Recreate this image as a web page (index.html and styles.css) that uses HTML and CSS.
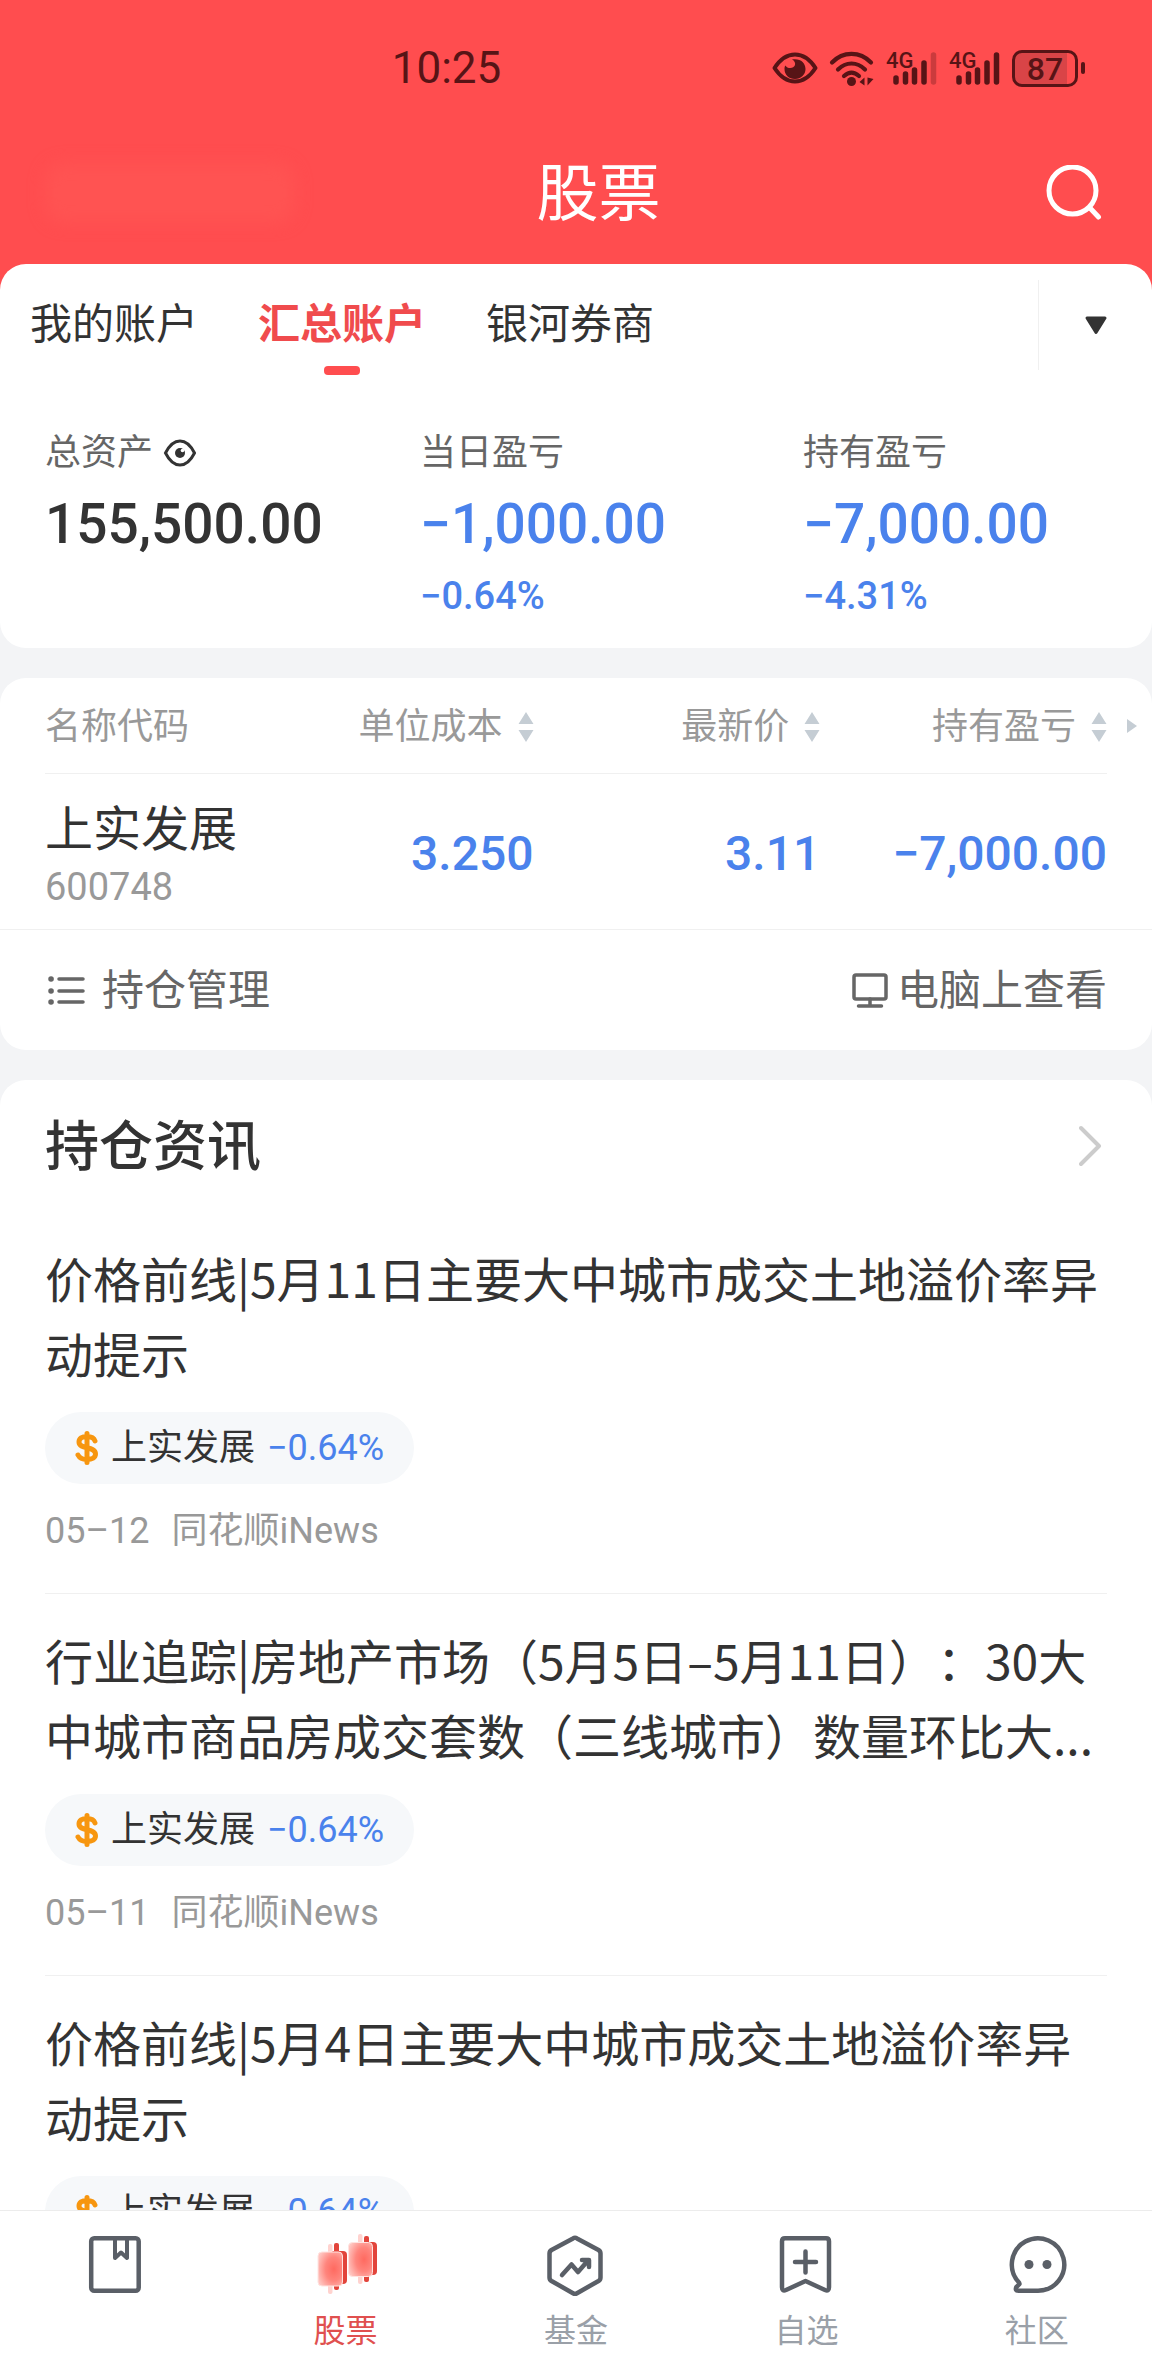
FILE: index.html
```html
<!DOCTYPE html>
<html lang="zh-CN">
<head>
<meta charset="utf-8">
<meta name="viewport" content="width=device-width, initial-scale=1">
<title>股票</title>
<link rel="stylesheet" href="styles.css">
</head>
<body>
<svg class="defs" aria-hidden="true">
  <defs>
    <symbol id="sort" viewBox="0 0 16 32"><path d="M8 1l7.500 12H.5zM8 31l7.500-12H.5z"/></symbol>
    <symbol id="dollar" viewBox="0 0 24 34">
      <path d="M20 10c-1-3-4-4.500-8-4.500-5 0-8 2-8 5.500 0 8 16.500 3.500 16.500 12 0 3.500-3.500 5.500-8.500 5.500-4.500 0-7.500-1.500-9-4.500M12 2.500v29" fill="none" stroke="currentColor" stroke-width="5" stroke-linecap="round"/>
    </symbol>
  </defs>
</svg>
<div class="app">
  <header class="top">
    <div class="status">
      <time class="clock">10:25</time>
      <div class="status-icons">
        <svg width="46" height="38" viewBox="0 0 46 38" aria-hidden="true">
          <path d="M2.500 19C9 9 16 5.500 23 5.500S37 9 43.500 19C37 29 30 32.500 23 32.500S9 29 2.500 19z" fill="none" stroke="currentColor" stroke-width="4" stroke-linejoin="round"/>
          <path d="M20 10.500c8-1.500 13.500 3 13.500 9.500 0 5.500-4.500 10-10.500 10s-10.500-4-10.500-10c0-1.500.3-2.500.8-3.500 2 3.500 8.500 3.500 9.700-.5.6-2-.5-4.500-3-5.500z" fill="currentColor"/>
        </svg>
        <svg width="46" height="38" viewBox="0 0 46 38" aria-hidden="true">
          <g fill="none" stroke="currentColor" stroke-width="4.200" stroke-linecap="round">
            <path d="M3 13.500c11-11.500 28-11.500 39 0M9 20.500c8-8 19-8 27 0M15 27c5-4.500 10-4.500 15 0"/>
          </g>
          <circle cx="22.500" cy="32.500" r="4.500" fill="currentColor"/>
          <path d="M30.500 33l5-4.500v8zM36.500 28.500v8M38.500 28.500v8l6-6.500z" fill="currentColor"/>
        </svg>
        <svg width="52" height="38" viewBox="0 0 52 38" aria-label="4G">
          <text class="net" x="0" y="19">4G</text>
          <g stroke="currentColor" stroke-width="5.500" stroke-linecap="round">
            <path d="M10 29v4M19.500 25v8M28.500 21v12M38 14v19"/><path d="M47.500 6v27" opacity=".3"/>
          </g>
        </svg>
        <svg width="52" height="38" viewBox="0 0 52 38" aria-label="4G">
          <text class="net" x="0" y="19">4G</text>
          <path d="M10 29v4M19.500 25v8M28.500 21v12M38 14v19M47.500 6v27" stroke="currentColor" stroke-width="5.500" stroke-linecap="round"/>
        </svg>
        <div class="battery"><span class="battery-body">87</span><span class="battery-tip"></span></div>
      </div>
    </div>
    <div class="title-bar">
      <span class="account-name"></span>
      <h1 class="page-title">股票</h1>
      <button class="search" type="button" aria-label="搜索">
        <svg width="56" height="56" viewBox="0 0 56 56" fill="none" stroke="currentColor" stroke-width="5" stroke-linecap="round"><circle cx="26.500" cy="25.500" r="23.500"/><path d="M44 43l8.500 9"/></svg>
      </button>
    </div>
  </header>

  <main class="content">
    <section class="card">
      <div class="tab-row">
        <nav class="tabs">
          <button class="tab" type="button">我的账户</button>
          <button class="tab tab-active" type="button">汇总账户</button>
          <button class="tab" type="button">银河券商</button>
        </nav>
        <button class="more" type="button" aria-label="展开账户">
          <svg width="24" height="20" viewBox="0 0 24 20"><path d="M3 3h18l-9 14.500z" fill="currentColor" stroke="currentColor" stroke-width="3" stroke-linejoin="round"/></svg>
        </button>
      </div>
      <dl class="summary">
        <div class="stat">
          <dt class="stat-label">总资产
            <button class="eye" type="button" aria-label="隐藏金额">
              <svg width="34" height="30" viewBox="0 0 34 30"><path d="M2.500 15C6 8 11 3 17 3s11 5 14.500 12C28 22 23 27 17 27S6 22 2.500 15z" fill="none" stroke="currentColor" stroke-width="3"/><circle cx="17" cy="15" r="5" fill="currentColor"/><circle cx="19.500" cy="12.500" r="1.800" fill="#fff"/></svg>
            </button>
          </dt>
          <dd class="stat-value">155,500.00</dd>
        </div>
        <div class="stat">
          <dt class="stat-label">当日盈亏</dt>
          <dd class="stat-value loss">−1,000.00</dd>
          <dd class="stat-rate loss">−0.64%</dd>
        </div>
        <div class="stat">
          <dt class="stat-label">持有盈亏</dt>
          <dd class="stat-value loss">−7,000.00</dd>
          <dd class="stat-rate loss">−4.31%</dd>
        </div>
      </dl>
    </section>

    <section class="card">
      <div class="holdings">
        <table class="holdings-table">
          <thead>
            <tr>
              <th class="col-name" scope="col">名称代码</th>
              <th class="col-num" scope="col"><button class="sort" type="button">单位成本<svg width="16" height="32"><use href="#sort"/></svg></button></th>
              <th class="col-num" scope="col"><button class="sort" type="button">最新价<svg width="16" height="32"><use href="#sort"/></svg></button></th>
              <th class="col-num" scope="col"><button class="sort" type="button">持有盈亏<svg width="16" height="32"><use href="#sort"/></svg></button></th>
            </tr>
          </thead>
          <tbody>
            <tr>
              <td class="col-name"><div class="stock-name">上实发展</div><div class="stock-code">600748</div></td>
              <td class="col-num loss">3.250</td>
              <td class="col-num loss">3.11</td>
              <td class="col-num loss">−7,000.00</td>
            </tr>
          </tbody>
        </table>
        <button class="scroll-next" type="button" aria-label="更多列"><svg width="10" height="14" viewBox="0 0 10 14"><path d="M0 0l10 7-10 7z" fill="currentColor"/></svg></button>
      </div>
      <div class="tools">
        <button class="tool tool-manage" type="button">
          <svg width="42" height="42" viewBox="0 0 42 42" fill="none" stroke="currentColor" stroke-width="3.500" stroke-linecap="round"><path d="M14 9h24M14 21h24M14 32h24"/><path d="M6 9h.1M6 21h.1M6 32h.1" stroke-width="5.500"/></svg>
          持仓管理
        </button>
        <button class="tool tool-desktop" type="button">
          <svg width="42" height="42" viewBox="0 0 42 42" fill="none" stroke="currentColor" stroke-width="3.500" stroke-linecap="round" stroke-linejoin="round"><rect x="5" y="5" width="32" height="24" rx="2"/><path d="M21 29v7M9.500 36h23"/></svg>
          电脑上查看
        </button>
      </div>
    </section>

    <section class="card">
      <a class="news-head" href="#news">
        <h2 class="news-heading">持仓资讯</h2>
        <svg class="chevron" width="28" height="42" viewBox="0 0 28 42" fill="none" stroke="currentColor" stroke-width="4" stroke-linecap="round" stroke-linejoin="round"><path d="M2 3l18 18L2 39"/></svg>
      </a>
      <article class="news">
        <h3 class="news-title">价格前线|5月11日主要大中城市成交土地溢价率异动提示</h3>
        <a class="chip" href="#600748"><svg class="chip-icon" width="24" height="34"><use href="#dollar"/></svg>上实发展<span class="chip-rate">−0.64%</span></a>
        <p class="meta"><time>05–12</time><span>同花顺iNews</span></p>
      </article>
      <article class="news">
        <h3 class="news-title">行业追踪|房地产市场（5月5日–5月11日）<span class="colon">：</span>30大中城市商品房成交套数（三线城市）数量环比大...</h3>
        <a class="chip" href="#600748"><svg class="chip-icon" width="24" height="34"><use href="#dollar"/></svg>上实发展<span class="chip-rate">−0.64%</span></a>
        <p class="meta"><time>05–11</time><span>同花顺iNews</span></p>
      </article>
      <article class="news">
        <h3 class="news-title">价格前线|5月4日主要大中城市成交土地溢价率异动提示</h3>
        <a class="chip" href="#600748"><svg class="chip-icon" width="24" height="34"><use href="#dollar"/></svg>上实发展<span class="chip-rate">−0.64%</span></a>
      </article>
    </section>
  </main>

  <nav class="bottom-nav">
    <a class="nav-item" href="#ledger" aria-label="账本">
      <svg width="64" height="64" viewBox="0 0 64 64" fill="none" stroke="currentColor" stroke-width="4.500" stroke-linejoin="round"><rect x="8.200" y="5.200" width="47.500" height="52.500" rx="3"/><path d="M32 5v20l6-5.500 6 5.500V5" stroke-width="4"/></svg>
      <span class="nav-label"></span>
    </a>
    <a class="nav-item nav-active" href="#stocks">
      <svg width="64" height="64" viewBox="0 0 64 64">
        <defs>
          <radialGradient id="candle" cx=".65" cy=".5" r=".7"><stop offset="0" stop-color="#ff6a60"/><stop offset=".5" stop-color="#ff857d"/><stop offset="1" stop-color="#ffc4bf"/></radialGradient>
        </defs>
        <g fill="#e2443b"><rect x="20" y="10" width="5" height="47" rx="2"/><rect x="14" y="18" width="19" height="33" rx="4"/><rect x="50" y="3" width="5" height="46" rx="2"/><rect x="44" y="9" width="19" height="33" rx="4"/></g>
        <g fill="#ffd3cf"><rect x="14" y="11" width="4.500" height="50" rx="2"/><rect x="44" y="1" width="4.500" height="50" rx="2"/></g>
        <g fill="url(#candle)" stroke="#ffe3e0" stroke-width="1"><rect x="4" y="19" width="24.500" height="34" rx="4"/><rect x="34.500" y="9.500" width="24" height="34" rx="4"/></g>
      </svg>
      <span class="nav-label">股票</span>
    </a>
    <a class="nav-item" href="#funds">
      <svg width="64" height="64" viewBox="0 0 64 64" fill="none" stroke="currentColor" stroke-width="4.500" stroke-linejoin="round" stroke-linecap="round"><path d="M29 5.400q2-1.200 4 0L54.500 17q2 1.200 2 3.500v24q0 2.300-2 3.500L33 60.200q-2 1.200-4 0L7.500 48q-2-1.200-2-3.500v-24q0-2.300 2-3.500z"/><path d="M18 42l9.500-10.500 6.500 7.500L44 27.500M38 27h7v7"/></svg>
      <span class="nav-label">基金</span>
    </a>
    <a class="nav-item" href="#watchlist">
      <svg width="64" height="64" viewBox="0 0 64 64" fill="none" stroke="currentColor" stroke-width="4.500" stroke-linejoin="round" stroke-linecap="round"><path d="M11 5.200h41q3 0 3 3v46q0 4.500-4 2.800L31.500 48 12 57q-4 1.700-4-2.800v-46q0-3 3-3zM31.500 18.500v21M21 29h21"/></svg>
      <span class="nav-label">自选</span>
    </a>
    <a class="nav-item" href="#community">
      <svg width="64" height="64" viewBox="0 0 64 64" fill="none" stroke="currentColor" stroke-width="4.500" stroke-linejoin="round"><path d="M33 57.700A26.200 26.200 0 1 0 14 49.500l.5 1.500-3.200 3.200q-1.500 3.500 2 3.500z"/><g fill="currentColor" stroke="none"><circle cx="24" cy="31.500" r="4.500"/><circle cx="42" cy="31.500" r="4.500"/></g></svg>
      <span class="nav-label">社区</span>
    </a>
  </nav>
</div>
</body>
</html>
```
FILE: styles.css
```css
:root {
  --red: #ff4d4f;
  --blue: #4a82ec;
  --ink: #333;
  --muted: #999;
  --line: #f0f0f0;
  --side: 45px;
}

* { box-sizing: border-box; }

body {
  margin: 0;
  font-family: Roboto, "Noto Sans CJK SC", sans-serif;
  font-size: 36px;
  line-height: 54px;
  color: var(--ink);
  background: #fff;
}

h1, h2, h3, p, dl, dd { margin: 0; font-weight: 400; }

button {
  display: inline-flex;
  align-items: center;
  padding: 0;
  border: 0;
  background: none;
  font: inherit;
  color: inherit;
}

a { color: inherit; text-decoration: none; }
svg { display: block; flex: none; }
.defs { position: absolute; width: 0; height: 0; }
.loss { color: var(--blue); }

.app { display: flex; flex-direction: column; height: 100vh; }

/* Header */
.top { flex: none; background: var(--red); }

.status {
  display: flex;
  justify-content: space-between;
  align-items: center;
  height: 134px;
  padding: 2px 67px 0 34%;
  color: #571416;
}
.clock { font-size: 44px; }
.status-icons { display: flex; align-items: center; gap: 11px; }
.net { font-size: 22px; font-weight: 500; fill: currentColor; }
.battery { display: flex; align-items: center; gap: 3px; }
.battery-body {
  width: 66px;
  height: 37px;
  border: 3px solid currentColor;
  border-radius: 10px;
  background: linear-gradient(90deg, #d94447 87%, transparent 87%);
  font-size: 32px;
  font-weight: 500;
  line-height: 32px;
  text-align: center;
}
.battery-tip { width: 4px; height: 12px; border-radius: 2px; background: currentColor; }

.title-bar {
  display: grid;
  grid-template-columns: 1fr auto 1fr;
  align-items: center;
  height: 130px;
  padding: 0 50px 12px var(--side);
  color: #fff;
}
.account-name {
  width: 250px;
  height: 60px;
  border-radius: 20px;
  background: #ff5352;
  filter: blur(8px);
}
.page-title { margin-left: 50px; padding-top: 3px; font-size: 62px; line-height: 90px; }
.search { justify-self: end; }

/* Cards */
.content {
  flex: 1;
  min-height: 0;
  overflow-y: auto;
  scrollbar-width: none;
  display: flex;
  flex-direction: column;
  gap: 30px;
  background: linear-gradient(var(--red) 60px, #f3f4f6 60px);
}
.card { flex: none; border-radius: 26px; background: #fff; }

.tab-row { display: flex; justify-content: space-between; padding: 16px 0 14px; }
.tabs { display: flex; gap: 60px; padding-left: 30px; }
.tab { position: relative; font-size: 42px; }
.tab-active { color: #f04b4d; font-weight: 700; }
.tab-active::after {
  content: "";
  position: absolute;
  left: 50%;
  bottom: -5px;
  width: 36px;
  height: 9px;
  margin-left: -18px;
  border-radius: 4px;
  background: var(--red);
}
.more { justify-content: center; width: 114px; height: 90px; border-left: 1px solid var(--line); }

.summary {
  display: grid;
  grid-template-columns: 375fr 383fr 304fr;
  padding: 42px var(--side) 28px;
}
.stat-label { display: flex; align-items: center; gap: 10px; color: #666; }
.eye { color: var(--ink); }
.stat-value { margin-top: 8px; font-size: 55px; font-weight: 500; line-height: 72px; }
.stat-rate { margin-top: 12px; font-size: 38px; font-weight: 500; line-height: 48px; }

/* Holdings */
.holdings { display: flex; align-items: flex-start; padding-left: var(--side); }
.holdings-table { flex: 1; border-spacing: 0; table-layout: fixed; }
.holdings-table th {
  height: 96px;
  padding: 2px 0 0;
  border-bottom: 1px solid var(--line);
  color: var(--muted);
  font-weight: 400;
}
.holdings-table td { padding: 26px 0 15px; }
.holdings-table .col-name { text-align: left; }
.holdings-table .col-num { width: 27%; text-align: right; }
.holdings-table td.col-num { padding: 20px 0 16px; font-size: 48px; font-weight: 500; }
.sort { gap: 15px; }
.sort svg { fill: #c5cdd4; }
.stock-name { font-size: 48px; line-height: 60px; }
.stock-code { font-size: 38px; color: var(--muted); }
.scroll-next { justify-content: center; width: var(--side); height: 96px; padding-left: 4px; color: #c5cdd4; }

.tools {
  display: flex;
  justify-content: space-between;
  height: 121px;
  padding: 2px var(--side) 0;
  border-top: 1px solid var(--line);
  font-size: 42px;
  color: #666;
}
.tool-manage { gap: 15px; }
.tool-desktop { gap: 6px; }

/* News */
.news-head {
  display: flex;
  justify-content: space-between;
  align-items: center;
  height: 132px;
  padding: 0 var(--side);
}
.news-heading { padding-top: 3px; font-size: 54px; font-weight: 500; line-height: 80px; }
.chevron { color: #ccc; }
.news {
  margin: 0 var(--side);
  padding: 28px 0 35px;
  border-bottom: 1px solid var(--line);
}
.news-title {
  font-family: "Noto Sans CJK SC", sans-serif;
  font-size: 48px;
  line-height: 75px;
  text-spacing-trim: space-all;
}
.colon { font-family: "Noto Sans CJK TC", sans-serif; line-height: 1; }
.chip {
  display: inline-flex;
  align-items: center;
  height: 72px;
  margin-top: 22px;
  padding: 0 30px;
  border-radius: 36px;
  background: #f6f8fa;
  vertical-align: top;
}
.chip-icon { margin-right: 12px; color: #f7960f; }
.chip-rate { margin-left: 12px; color: var(--blue); }
.meta { display: flex; gap: 22px; margin-top: 20px; color: var(--muted); }

/* Bottom navigation */
.bottom-nav {
  flex: none;
  display: grid;
  grid-template-columns: repeat(5, 1fr);
  padding: 22px 0 21px;
  border-top: 1px solid #ececec;
  background: #fff;
}
.nav-item {
  display: flex;
  flex-direction: column;
  align-items: center;
  gap: 10px;
  color: #5a5f67;
}
.nav-label { height: 48px; font-size: 32px; line-height: 48px; color: #9aa0a8; }
.nav-active .nav-label { color: #e0504f; }
```
